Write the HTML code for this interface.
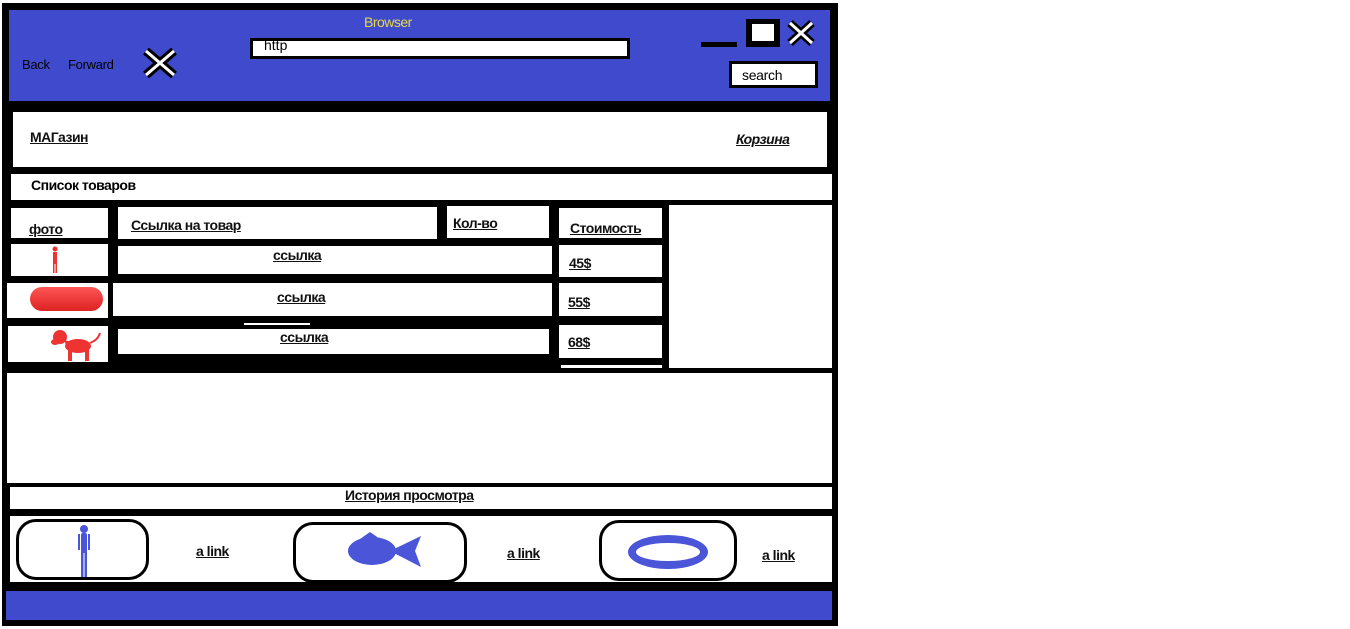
<!DOCTYPE html>
<html><head><meta charset="utf-8"><style>
body{margin:0;width:1350px;height:629px;background:#fff;position:relative;overflow:hidden;font-family:"Liberation Sans","DejaVu Sans",sans-serif}
div{position:absolute;box-sizing:border-box}
.w{background:#fff}
.t{font-weight:bold;font-size:14px;color:#111;text-decoration:underline;letter-spacing:-0.5px}
.card{border:3px solid #000;border-radius:20px;background:#fff}
</style></head><body>
<div style="left:2px;top:3px;width:836px;height:623px;background:#000"></div>
<div style="left:9px;top:10px;width:821px;height:91px;background:#3f4bcc"></div>
<div style="left:364px;top:14px;font-size:14px;color:#e8d84a;letter-spacing:-0.5px">Browser</div>
<div style="left:250px;top:38px;width:380px;height:21px;background:#fff;border:3px solid #000"></div>
<div style="left:264px;top:37px;font-size:14px">http</div>
<div style="left:22px;top:57px;font-size:13px;color:#000;letter-spacing:-0.3px">Back</div>
<div style="left:68px;top:57px;font-size:13px;color:#000;letter-spacing:-0.3px">Forward</div>
<svg style="position:absolute;left:142px;top:48px" width="36" height="30"><path d="M4 3L32 27M32 3L4 27" stroke="#000" stroke-width="9"/><path d="M4 3L32 27M32 3L4 27" stroke="#fff" stroke-width="3"/></svg>
<div style="left:701px;top:42px;width:36px;height:5px;background:#000"></div>
<div style="left:746px;top:19px;width:34px;height:28px;background:#000"></div>
<div style="left:752px;top:24px;width:22px;height:17px;background:#fff"></div>
<svg style="position:absolute;left:786px;top:20px" width="30" height="26"><path d="M4 3L26 23M26 3L4 23" stroke="#000" stroke-width="8"/><path d="M4 3L26 23M26 3L4 23" stroke="#fff" stroke-width="3"/></svg>
<div style="left:729px;top:61px;width:89px;height:27px;background:#fff;border:3px solid #000"></div>
<div style="left:742px;top:67px;font-size:14px;letter-spacing:-0.3px">search</div>

<div class="w" style="left:13px;top:112px;width:814px;height:55px"></div>
<div class="t" style="left:30px;top:129px">МАГазин</div>
<div class="t" style="left:736px;top:131px;font-style:italic">Корзина</div>
<div class="w" style="left:11px;top:174px;width:821px;height:26px"></div>
<div style="left:31px;top:177px;font-size:14px;font-weight:bold;letter-spacing:-0.5px">Список товаров</div>

<div class="w" style="left:11px;top:208px;width:97px;height:30px"></div>
<div class="t" style="left:29px;top:221px">фото</div>
<div class="w" style="left:118px;top:207px;width:319px;height:32px"></div>
<div class="t" style="left:131px;top:217px">Ссылка на товар</div>
<div class="w" style="left:447px;top:206px;width:102px;height:32px"></div>
<div class="t" style="left:453px;top:215px">Кол-во</div>
<div class="w" style="left:559px;top:208px;width:103px;height:30px"></div>
<div class="t" style="left:570px;top:220px">Стоимость</div>
<div class="w" style="left:669px;top:205px;width:163px;height:163px"></div>

<div class="w" style="left:11px;top:244px;width:97px;height:32px"></div>
<svg style="position:absolute;left:50px;top:246px" width="10" height="28"><circle cx="5" cy="3" r="2.5" fill="#e33"/><rect x="3" y="6" width="4" height="12" fill="#e33"/><rect x="3" y="16" width="1.5" height="11" fill="#e33"/><rect x="5.5" y="16" width="1.5" height="11" fill="#e33"/></svg>
<div class="w" style="left:118px;top:246px;width:434px;height:28px"></div>
<div class="t" style="left:273px;top:247px">ссылка</div>
<div class="w" style="left:559px;top:245px;width:103px;height:32px"></div>
<div class="t" style="left:569px;top:255px">45$</div>

<div class="w" style="left:7px;top:283px;width:101px;height:35px"></div>
<div style="left:30px;top:287px;width:73px;height:24px;border-radius:12px;background:linear-gradient(#f55,#d22)"></div>
<div class="w" style="left:113px;top:283px;width:439px;height:33px"></div>
<div class="t" style="left:277px;top:289px">ссылка</div>
<div class="w" style="left:559px;top:283px;width:103px;height:33px"></div>
<div class="t" style="left:568px;top:294px">55$</div>

<div class="w" style="left:8px;top:326px;width:100px;height:36px"></div>
<svg style="position:absolute;left:46px;top:328px" width="58" height="34"><ellipse cx="32" cy="18" rx="13" ry="7" fill="#e33"/><circle cx="14" cy="9" r="7" fill="#e33"/><ellipse cx="9" cy="14" rx="4" ry="3" fill="#e33"/><path d="M18 12L26 14L22 22Z" fill="#e33"/><rect x="22" y="20" width="4" height="13" fill="#e33"/><rect x="39" y="20" width="4" height="13" fill="#e33"/><path d="M44 15Q52 12 54 5" stroke="#e33" stroke-width="2" fill="none"/></svg>
<div class="w" style="left:118px;top:329px;width:431px;height:25px"></div>
<div class="w" style="left:244px;top:323px;width:66px;height:2px"></div>
<div class="t" style="left:280px;top:329px">ссылка</div>
<div class="w" style="left:559px;top:325px;width:103px;height:33px"></div>
<div class="t" style="left:568px;top:334px">68$</div>
<div class="w" style="left:561px;top:365px;width:101px;height:3px"></div>

<div class="w" style="left:7px;top:373px;width:825px;height:110px"></div>
<div class="w" style="left:10px;top:487px;width:822px;height:22px"></div>
<div class="t" style="left:345px;top:487px">История просмотра</div>
<div class="w" style="left:10px;top:516px;width:822px;height:66px"></div>
<div class="card" style="left:16px;top:519px;width:133px;height:61px"></div>
<svg style="position:absolute;left:76px;top:524px" width="16" height="54"><circle cx="8" cy="5" r="4" fill="#4a55d8"/><rect x="5" y="9" width="6" height="20" rx="2" fill="#4a55d8"/><rect x="2" y="10" width="2" height="16" fill="#4a55d8"/><rect x="12" y="10" width="2" height="16" fill="#4a55d8"/><rect x="5" y="28" width="2.5" height="25" fill="#4a55d8"/><rect x="8.5" y="28" width="2.5" height="25" fill="#4a55d8"/></svg>
<div class="t" style="left:196px;top:543px">a link</div>
<div class="card" style="left:293px;top:522px;width:174px;height:61px"></div>
<svg style="position:absolute;left:345px;top:531px" width="80" height="40"><ellipse cx="27" cy="20" rx="24" ry="14" fill="#4a55d8"/><path d="M45 20L76 5L70 20L76 36Z" fill="#4a55d8"/><path d="M15 8L25 1L35 8Z" fill="#4a55d8"/></svg>
<div class="t" style="left:507px;top:545px">a link</div>
<div class="card" style="left:599px;top:520px;width:138px;height:61px"></div>
<div style="left:628px;top:535px;width:80px;height:34px;border:8px solid #4a55d8;border-radius:50%"></div>
<div class="t" style="left:762px;top:547px">a link</div>
<div style="left:6px;top:591px;width:826px;height:29px;background:#3f4bcc"></div>
</body></html>
